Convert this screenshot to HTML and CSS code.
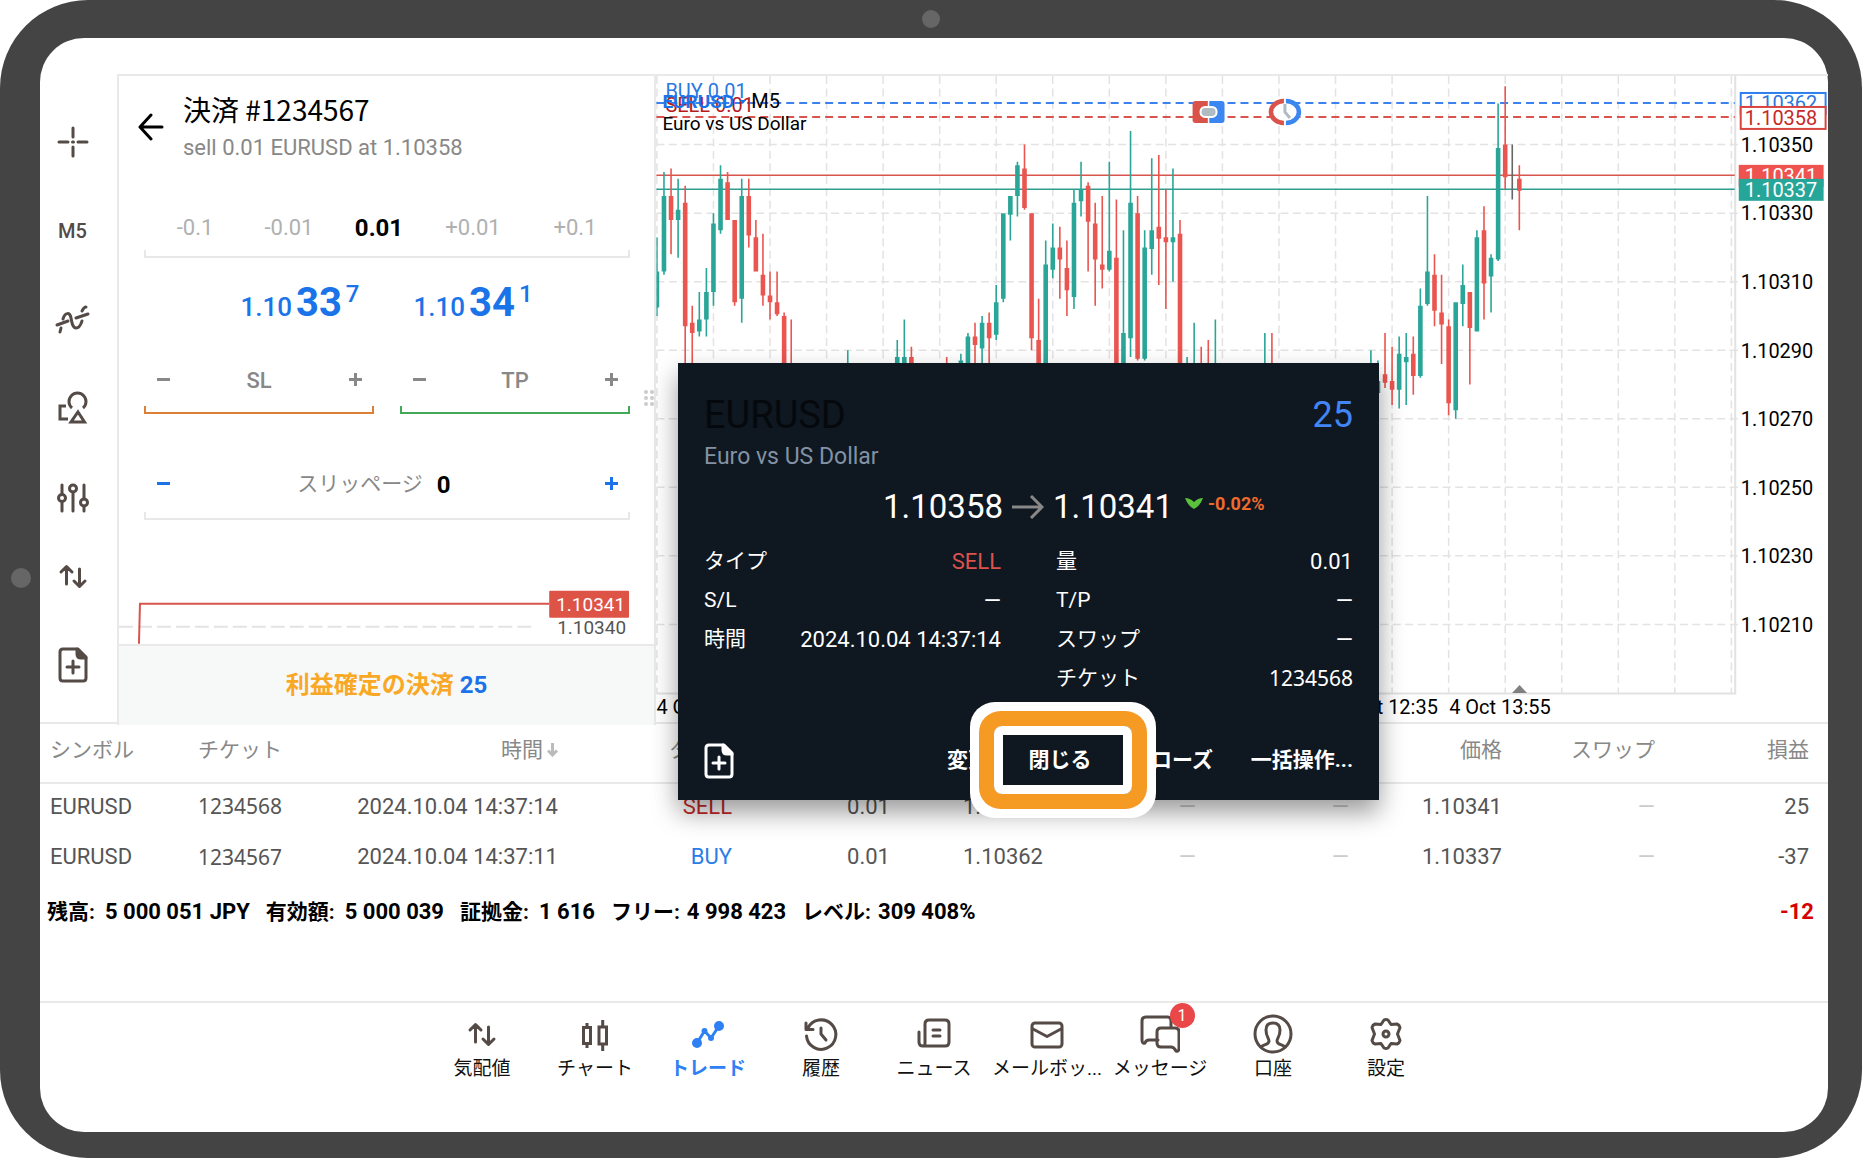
FILE: index.html
```html
<!DOCTYPE html>
<html lang="ja">
<head>
<meta charset="utf-8">
<meta name="viewport" content="width=device-width, initial-scale=1">
<title>トレード</title>
<link rel="stylesheet" href="styles.css">
</head>
<body>
<svg class="defs" aria-hidden="true">
  <symbol id="i-cross" viewBox="-20 -20 40 40"><path d="M0-14V-5M0 5V14M-14 0H-5M5 0H14M-.5 0H.5"/></symbol>
  <symbol id="i-indicator" viewBox="-20 -20 40 40"><path d="M-16 5-5 1M3-2 15-6M-13 12-12 8M-10-1C-8-8-3-8-2-2-1 4 0 8 3 8 7 8 8 4 9 1M9-9C10-11 11-13 13-13"/></symbol>
  <symbol id="i-shapes" viewBox="-20 -20 40 40"><path class="square" d="M-7-3H-13V10H-5M-1-1A8.500 8.500 0 1 1 10-1M5 3 11.500 13H-2Z"/></symbol>
  <symbol id="i-sliders" viewBox="-20 -20 40 40"><path d="M-11-13V-4M-11 4V13M0-6V13M11-13V1M11 8V13"/><circle cx="-11" cy="0" r="3.5"/><circle cx="0" cy="-9.5" r="3.5"/><circle cx="11" cy="4.5" r="3.5"/></symbol>
  <symbol id="i-updown" viewBox="-20 -20 40 40"><path d="M-6.5 8V-9M-12-4-6.5-9.5-1-4M6.5-7V10M1 5 6.5 10.5 12 5"/></symbol>
  <symbol id="i-doc" viewBox="-20 -20 40 40"><path d="M-10-16H5L13-8V13Q13 16 10 16H-10Q-13 16-13 13V-13Q-13-16-10-16ZM0-4V8M-6 2H6"/><path class="solid" d="M4-16V-11Q4-7 8-7H13Z"/></symbol>
  <symbol id="i-candles" viewBox="-20 -20 40 40"><path class="square" d="M-11.500-6.500H-4.500V9.500H-11.500ZM-8-11V-7M-8 10V14M4-7H11.500V10H4ZM7.700-14V-7M7.700 10V17"/></symbol>
  <symbol id="i-trade" viewBox="-20 -20 40 40"><path d="M-11 9-3.500-3 3 4 11-8"/><g class="solid"><circle cx="-11" cy="9" r="3.5"/><circle cx="11" cy="-8" r="3.5"/><circle cx="-3.500" cy="-3" r="1.500"/><circle cx="3" cy="4" r="1.500"/></g></symbol>
  <symbol id="i-history" viewBox="-20 -20 40 40"><path d="M-14.500 2A14.700 14.700 0 1 0-13-6M-15-11V-4.500H-8M0-6V0L5 6"/></symbol>
  <symbol id="i-news" viewBox="-20 -20 40 40"><path d="M-9-10Q-9-14-5-14H11Q15-14 15-10V8Q15 12 11 12H-11Q-15 12-15 8V-2M-9-10V9Q-9 12-11 12M-1-4H6M-1 2H6"/></symbol>
  <symbol id="i-mail" viewBox="-20 -20 40 40"><rect x="-15" y="-11" width="30" height="24" rx="3"/><path d="M-14-5 0 2.500 14-5"/></symbol>
  <symbol id="i-chat" viewBox="-20 -20 40 40"><path d="M-2 6H-11Q-14 6-15 9-18 10-18 6V-13Q-18-17-14-17H8Q11-17 11-13V-6M1-6H15Q19-6 19-2V14Q19 18 16 17 14 13 11 13H1Q-3 13-3 9V-2Q-3-6 1-6Z"/></symbol>
  <symbol id="i-account" viewBox="-20 -20 40 40"><circle cx="0" cy="0" r="18"/><path d="M-12 13C-9 10-4 11-4 7-4 4-7 3-7-4-7-9-4-11 0-11S7-9 7-4C7 3 4 4 4 7 4 11 9 10 12 13"/></symbol>
  <symbol id="i-gear" viewBox="-20 -20 40 40"><path d="M-2-14Q0-15 2-14L5-9.500 11-10Q13.500-9 14-6.500L11.500 0 14 6.500Q13.500 9 11 10L5 9.500 2 14Q0 15-2 14L-5 9.500-11 10Q-13.500 9-14 6.500L-11.500 0-14-6.500Q-13.500-9-11-10L-5-9.500Z"/><circle cx="0" cy="0" r="3"/></symbol>
</svg>

<div class="device">
  <span class="sensor sensor-top"></span>
  <span class="sensor sensor-left"></span>
  <main class="screen">
    <div class="workspace">
      <nav class="tools" aria-label="チャートツール">
        <button type="button" aria-label="十字線"><svg class="icon"><use href="#i-cross"/></svg></button>
        <button type="button" class="timeframe">M5</button>
        <button type="button" aria-label="指標"><svg class="icon"><use href="#i-indicator"/></svg></button>
        <button type="button" aria-label="オブジェクト"><svg class="icon"><use href="#i-shapes"/></svg></button>
        <button type="button" aria-label="表示設定"><svg class="icon"><use href="#i-sliders"/></svg></button>
        <button type="button" aria-label="売買"><svg class="icon"><use href="#i-updown"/></svg></button>
        <button type="button" aria-label="新規注文"><svg class="icon"><use href="#i-doc"/></svg></button>
      </nav>

      <section class="order">
        <header class="order-head">
          <button type="button" class="back" aria-label="戻る"><svg viewBox="0 0 26 30"><path d="M24 15H3M13 3 2 15 13 27"/></svg></button>
          <div>
            <h1>決済 #1234567</h1>
            <p>sell 0.01 EURUSD at 1.10358</p>
          </div>
        </header>
        <div class="field volume">
          <button type="button">-0.1</button>
          <button type="button">-0.01</button>
          <input type="text" value="0.01" aria-label="量">
          <button type="button">+0.01</button>
          <button type="button">+0.1</button>
        </div>
        <div class="quotes">
          <p class="quote">1.10<b>33</b><sup>7</sup></p>
          <p class="quote">1.10<b>34</b><sup>1</sup></p>
        </div>
        <div class="limits">
          <div class="field stepper sl">
            <button type="button" class="minus" aria-label="SLを下げる"></button>
            <input type="text" placeholder="SL" aria-label="SL">
            <button type="button" class="plus" aria-label="SLを上げる"></button>
          </div>
          <div class="field stepper tp">
            <button type="button" class="minus" aria-label="TPを下げる"></button>
            <input type="text" placeholder="TP" aria-label="TP">
            <button type="button" class="plus" aria-label="TPを上げる"></button>
          </div>
        </div>
        <div class="field stepper slippage">
          <button type="button" class="minus" aria-label="減らす"></button>
          <div class="slip-value">
            <label for="slip">スリッページ</label>
            <input id="slip" type="text" value="0">
          </div>
          <button type="button" class="plus" aria-label="増やす"></button>
        </div>
        <svg class="ticks" viewBox="0 0 536 124">
          <path d="M0 107H418" stroke="#e3e3e3" stroke-width="2" stroke-dasharray="14 5"/>
          <path d="M20 124 21 84H431" fill="none" stroke="#d9544d" stroke-width="2"/>
          <rect x="431" y="71" width="80" height="27" rx="1" fill="#dd5447"/>
          <text x="438" y="91" fill="#fff">1.10341</text>
          <text x="439" y="114" fill="#555">1.10340</text>
        </svg>
        <button type="button" class="confirm">利益確定の決済 <span>25</span></button>
        <span class="grip" aria-hidden="true"><i></i><i></i><i></i><i></i><i></i><i></i></span>
      </section>

      <section class="chart">
        <svg id="chart" viewBox="0 0 1173 647" role="img" aria-label="EURUSD M5">
          <path id="grid" fill="none" stroke="#e3e3e3" stroke-width="1.500" stroke-dasharray="8 4.500"/>
          <path d="M0 618.500H1080.500V0" fill="none" stroke="#e2e2e2" stroke-width="2"/>
          <path d="M0 99.500H1080" stroke="#d9544d" stroke-width="1.500"/>
          <path d="M0 113.500H1080" stroke="#2f9d92" stroke-width="1.500"/>
          <path d="M0 27H1080" stroke="#3b82ee" stroke-width="2" stroke-dasharray="8 5"/>
          <path d="M0 41H1080" stroke="#d9544d" stroke-width="2" stroke-dasharray="8 5"/>
          <g id="candles"></g>
          <path d="M857 618 864.500 610 872 618Z" fill="#808080"/>
          <g transform="translate(553 36)">
            <path d="M0-11H-13Q-16-11-16-8V8Q-16 11-13 11H0Z" fill="#d9534a"/>
            <path d="M0-11H13Q16-11 16-8V8Q16 11 13 11H0Z" fill="#3b86f0"/>
            <path d="M0-11V-6M0 6V11" stroke="#fff" stroke-width="1.500"/>
            <rect x="-8" y="-5" width="16" height="10" rx="4.500" fill="#b0bcc4" stroke="#fff" stroke-width="2"/>
          </g>
          <g transform="translate(629.500 36)">
            <circle r="13" fill="#fff"/>
            <path d="M-1-11A13 11 0 0 0-1 11" fill="none" stroke="#d9534a" stroke-width="4.500"/>
            <path d="M1-11A13 11 0 0 1 1 11" fill="none" stroke="#3b86f0" stroke-width="4.500"/>
            <path d="M0-8V0L5 6" fill="none" stroke="#b0bcc4" stroke-width="3"/>
          </g>
          <g class="axis">
            <text x="1086" y="76">1.10350</text><text x="1086" y="144">1.10330</text>
            <text x="1086" y="213">1.10310</text><text x="1086" y="282">1.10290</text>
            <text x="1086" y="351">1.10270</text><text x="1086" y="420">1.10250</text>
            <text x="1086" y="488">1.10230</text><text x="1086" y="557">1.10210</text>
            <text x="0" y="639">4 Oct 04:35</text>
            <text x="681" y="639">4 Oct 12:35</text><text x="794" y="639">4 Oct 13:55</text>
          </g>
          <g class="tags">
            <rect x="1086" y="17" width="85" height="21" fill="#fff" stroke="#2f80ed" stroke-width="2"/>
            <text x="1090" y="34" fill="#2a78e0">1.10362</text>
            <rect x="1086" y="31" width="85" height="22" fill="#fff" stroke="#d9443f" stroke-width="2"/>
            <text x="1090" y="49" fill="#c62828">1.10358</text>
            <rect x="1084" y="89" width="85" height="22" fill="#ee534f"/>
            <text x="1090" y="107" fill="#fff">1.10341</text>
            <rect x="1084" y="103" width="85" height="22" fill="#26a599"/>
            <text x="1090" y="121" fill="#fff">1.10337</text>
          </g>
          <g class="legend">
            <text x="9" y="22" fill="#2a78e0">BUY 0.01</text>
            <text x="9" y="36" fill="#b71c1c">SELL 0.01</text>
            <text x="6" y="32" fill="#1a73e8" class="strong">EURUSD</text>
            <path d="M83 24H90L86.500 28Z" fill="#1a73e8"/>
            <text x="95" y="32">M5</text>
            <text x="6" y="54" class="name">Euro vs US Dollar</text>
          </g>
        </svg>
      </section>
    </div>

    <table class="positions">
      <colgroup><col class="w-sym"><col class="w-tic"><col class="w-time"><col class="w-type"><col class="w-vol"><col class="w-num"><col class="w-num"><col class="w-num"><col class="w-num"><col class="w-num"><col class="w-pl"></colgroup>
      <thead>
        <tr><th class="left">シンボル</th><th class="left">チケット</th><th>時間<svg class="sort" viewBox="0 0 11 14"><path d="M5.500 0V12M1 7.500 5.500 12 10 7.500"/></svg></th><th>タイプ</th><th>量</th><th>価格</th><th>S/L</th><th>T/P</th><th>価格</th><th>スワップ</th><th>損益</th></tr>
      </thead>
      <tbody>
        <tr><td class="left">EURUSD</td><td class="left ticket">1234568</td><td>2024.10.04 14:37:14</td><td class="sell">SELL</td><td>0.01</td><td>1.10358</td><td class="none">—</td><td class="none">—</td><td>1.10341</td><td class="none">—</td><td>25</td></tr>
        <tr><td class="left">EURUSD</td><td class="left ticket">1234567</td><td>2024.10.04 14:37:11</td><td class="buy">BUY</td><td>0.01</td><td>1.10362</td><td class="none">—</td><td class="none">—</td><td>1.10337</td><td class="none">—</td><td>-37</td></tr>
      </tbody>
    </table>

    <div class="summary">
      <p><span>残高:</span> 5 000 051 JPY</p>
      <p><span>有効額:</span> 5 000 039</p>
      <p><span>証拠金:</span> 1 616</p>
      <p class="tight"><span>フリー:</span> 4 998 423</p>
      <p class="tight"><span>レベル:</span> 309 408%</p>
      <p class="total">-12</p>
    </div>

    <nav class="tabs" aria-label="メイン">
      <a href="#quotes"><svg class="icon"><use href="#i-updown"/></svg>気配値</a>
      <a href="#chart"><svg class="icon"><use href="#i-candles"/></svg>チャート</a>
      <a href="#trade" class="active" aria-current="page"><svg class="icon"><use href="#i-trade"/></svg>トレード</a>
      <a href="#history"><svg class="icon"><use href="#i-history"/></svg>履歴</a>
      <a href="#news"><svg class="icon"><use href="#i-news"/></svg>ニュース</a>
      <a href="#mail"><svg class="icon"><use href="#i-mail"/></svg>メールボッ...</a>
      <a href="#messages"><svg class="icon"><use href="#i-chat"/></svg>メッセージ<span class="badge">1</span></a>
      <a href="#accounts"><svg class="icon"><use href="#i-account"/></svg>口座</a>
      <a href="#settings"><svg class="icon"><use href="#i-gear"/></svg>設定</a>
    </nav>

    <section class="modal" role="dialog" aria-label="EURUSD">
      <header class="modal-head"><h2>EURUSD</h2><span>25</span></header>
      <p class="modal-sub">Euro vs US Dollar</p>
      <p class="move">
        <span class="from">1.10358</span>
        <svg class="arrow" viewBox="0 0 32 24"><path d="M0 12H30M19 1 30 12 19 23"/></svg>
        <span>1.10341</span>
        <svg class="chev" viewBox="0 0 18 12"><path d="M0 1Q5 1 9 5 13 1 18 1 15 9 9 12 3 9 0 1Z"/></svg>
        <span class="pct">-0.02%</span>
      </p>
      <dl class="facts">
        <div><dt>タイプ</dt><dd class="red">SELL</dd></div>
        <div><dt>量</dt><dd>0.01</dd></div>
        <div><dt>S/L</dt><dd>—</dd></div>
        <div><dt>T/P</dt><dd>—</dd></div>
        <div><dt>時間</dt><dd>2024.10.04 14:37:14</dd></div>
        <div><dt>スワップ</dt><dd>—</dd></div>
        <div class="second"><dt>チケット</dt><dd class="ticket">1234568</dd></div>
      </dl>
      <footer class="actions">
        <button type="button" class="new" aria-label="新規注文"><svg class="icon"><use href="#i-doc"/></svg></button>
        <button type="button" class="edit">変更</button>
        <button type="button" class="close">閉じる<span class="ring"></span></button>
        <button type="button" class="by">クローズ</button>
        <button type="button" class="bulk">一括操作...</button>
      </footer>
    </section>
  </main>
</div>
<script src="chart.js"></script>
</body>
</html>
```

FILE: styles.css
```css
* { box-sizing: border-box; }

body {
  margin: 0;
  background: #fff;
  color: #111;
  font: 22px/1.2 Roboto, "Noto Sans CJK JP", sans-serif;
}

h1, h2, p, dl, dd { margin: 0; font-weight: 400; }
button, input { border: 0; padding: 0; background: none; color: inherit; font: inherit; }
button { white-space: nowrap; cursor: pointer; }
svg { display: block; }
.defs { position: absolute; width: 0; height: 0; }

.icon {
  width: 40px;
  height: 40px;
  overflow: visible;
  fill: none;
  stroke: currentColor;
  stroke-width: 3;
  stroke-linecap: round;
  stroke-linejoin: round;
}
.solid { fill: currentColor; }
.square { stroke-linecap: butt; stroke-linejoin: miter; }

/* Device shell */
.device {
  position: relative;
  min-height: 100vh;
  display: flex;
  padding: 38px 34px 26px 40px;
  border-radius: 88px;
  background: #444;
}
.sensor { position: absolute; width: 18px; height: 18px; border-radius: 50%; background: #666; }
.sensor-top { top: 10px; left: 50%; margin-left: -9px; }
.sensor-left { left: 11px; top: 50%; width: 20px; height: 20px; margin-top: -11px; }
.screen {
  position: relative;
  flex: 1;
  min-width: 0;
  display: flex;
  flex-direction: column;
  padding-top: 36px;
  border-radius: 44px;
  background: #fff;
}

/* Workspace */
.workspace {
  display: grid;
  grid-template-columns: 77px 539px minmax(0, 1fr);
  height: 650px;
  border-bottom: 2px solid #e9e9e9;
}
.tools {
  display: grid;
  grid-template-rows: repeat(5, 89px) 68px 110px;
  padding-top: 23px;
  padding-right: 12px;
  color: #544a46;
}
.tools button { display: grid; place-items: center; }
.tools .timeframe { font-size: 20px; font-weight: 500; }

.order {
  position: relative;
  display: flex;
  flex-direction: column;
  border: solid #e9e9e9;
  border-width: 2px 2px 0;
}
.order-head { display: flex; padding: 13px 0 0 19px; gap: 19px; }
.back { width: 26px; height: 76px; }
.back svg { width: 26px; height: 30px; fill: none; stroke: #000; stroke-width: 3; stroke-linecap: round; stroke-linejoin: round; }
.order h1 {
  font-family: "Noto Sans CJK JP", sans-serif;
  font-size: 28px;
  line-height: 40px;
  color: #000;
}
.order-head p { line-height: 37px; color: #888; }

.field {
  --line: #e8e8e8;
  display: flex;
  align-items: center;
  justify-content: space-between;
  background:
    linear-gradient(var(--line), var(--line)) bottom / 100% 2px no-repeat,
    linear-gradient(var(--line), var(--line)) left bottom / 2px 8px no-repeat,
    linear-gradient(var(--line), var(--line)) right bottom / 2px 8px no-repeat;
}
.field input { text-align: center; }
.volume { display: grid; grid-template-columns: 102px 86px 94px 94px 1fr; margin: 32px 24px 0 25px; height: 60px; color: #b0b0b0; }
.volume input { width: 100%; font-size: 24px; font-weight: 700; color: #000; }

.quotes { display: flex; justify-content: center; gap: 54px; height: 90px; line-height: 90px; }
.quote { font-size: 26px; font-weight: 500; color: #1a73e8; }
.quote b { margin-left: 4px; font-size: 40px; font-weight: 700; }
.quote sup { position: relative; top: -14px; margin-left: 4px; font-size: 24px; line-height: 0; vertical-align: baseline; }

.limits { display: flex; gap: 26px; padding: 0 24px 0 25px; }
.stepper { flex: 1; height: 66px; padding: 0 9px; color: #888; font-weight: 500; }
.stepper input { width: 60px; }
.stepper input::placeholder { color: #888; opacity: 1; }
.sl { --line: #dd7f35; }
.tp { --line: #43a857; }
.minus, .plus { position: relative; width: 20px; height: 30px; }
.minus::before, .plus::before, .plus::after {
  content: "";
  position: absolute;
  inset: 12px 3px auto 4px;
  height: 3px;
  background: currentColor;
}
.plus::after { inset: 7px auto auto 9px; width: 3px; height: 13px; }
.slippage { flex: none; margin: 36px 24px 0 25px; height: 70px; font-weight: 400; color: #1a73e8; }
.slip-value { display: flex; align-items: center; gap: 14px; color: #888; font-size: 21px; }
.slippage input { width: 40px; font-size: 24px; font-weight: 700; text-align: left; color: #000; }
.ticks { width: 100%; flex: 1; min-height: 0; font-size: 19px; }
.confirm {
  height: 81px;
  border-top: 2px solid #e9e9e9;
  background: #f7f8f8;
  color: #f9a825;
  font-size: 24px;
  font-weight: 700;
}
.confirm span { color: #1a73e8; }
.grip {
  position: absolute;
  right: 0;
  top: 314px;
  display: grid;
  grid-template-columns: 4px 4px;
  gap: 2px;
}
.grip i { width: 4px; height: 4px; border-radius: 50%; background: #ccc; }

.chart { border-top: 2px solid #e9e9e9; }
.chart svg { width: 100%; height: 646px; font-size: 20px; }
.legend .strong { font-weight: 700; font-size: 19px; }
.legend .name { font-size: 19px; }
.up { fill: #2aa698; }
.down { fill: #ea5550; }
.flat { fill: #666; }

/* Open positions */
.positions { width: 100%; border-collapse: collapse; table-layout: fixed; color: #555; }
.w-sym { width: 158px; }
.w-tic { width: 132px; }
.w-time { width: 228px; }
.w-type { width: 174px; }
.w-vol { width: 158px; }
.w-num { width: 153px; }
.w-pl { width: 173px; }
.positions th, .positions td { padding: 0; text-align: right; white-space: nowrap; }
.positions th { height: 59px; padding-bottom: 4px; border-bottom: 2px solid #e9e9e9; font-size: 21px; font-weight: 400; color: #888; }
.positions td { height: 51px; padding-bottom: 4px; }
.positions .left { text-align: left; }
.positions .left:first-child { padding-left: 10px; }
.positions th:last-child, .positions td:last-child { padding-right: 19px; }
.sort { display: inline-block; width: 11px; height: 14px; margin-left: 4px; fill: none; stroke: #bbb; stroke-width: 3; }
.ticket { font-family: "Noto Sans", sans-serif; font-size: 21px; }
.positions .sell { color: #c62828; }
.positions .buy { color: #2a7de8; }
.positions .none { color: #ccc; }

.summary { display: flex; padding: 0 14px 0 7px; gap: 16px; line-height: 54px; color: #000; }
.summary p { display: flex; gap: 10px; font-weight: 700; }
.summary .tight { gap: 7px; }
.summary span { font-size: 21px; }
.summary .total { margin-left: auto; color: #d50000; }

/* Bottom tabs */
.tabs {
  display: grid;
  grid-template-columns: repeat(9, 113px);
  justify-content: center;
  margin-top: auto;
  height: 131px;
  padding-top: 11px;
  border-top: 2px solid #e9e9e9;
}
.tabs a {
  position: relative;
  display: flex;
  flex-direction: column;
  align-items: center;
  font-size: 19px;
  line-height: 30px;
  white-space: nowrap;
  color: #111;
  text-decoration: none;
}
.tabs .icon { color: #544a46; }
.tabs .active, .tabs .active .icon { color: #2f80f5; font-weight: 700; }
.badge {
  position: absolute;
  left: 66px;
  top: -11px;
  width: 25px;
  height: 25px;
  border-radius: 50%;
  background: #ea4848;
  color: #fff;
  font-size: 16px;
  line-height: 25px;
  text-align: center;
}

/* Position details */
.modal {
  position: absolute;
  left: 638px;
  top: 325px;
  width: 701px;
  height: 437px;
  display: flex;
  flex-direction: column;
  padding: 28px 26px 15px;
  background: #0f1720;
  color: #fff;
  box-shadow: 0 12px 24px rgba(0, 0, 0, .4);
}
.modal-head { display: flex; justify-content: space-between; font-size: 36px; line-height: 48px; }
.modal-head h2 { font-size: 38px; color: #05090d; }
.modal-head span { color: #4285f4; }
.modal-sub { font-size: 23px; line-height: 36px; color: #8292a4; }
.move { display: flex; align-items: center; height: 64px; font-size: 33px; }
.from { margin-left: 179px; }
.arrow { width: 32px; height: 24px; margin: 0 9px; fill: none; stroke: #888; stroke-width: 3; }
.chev { width: 18px; height: 12px; margin: 0 5px 8px 12px; fill: #5ac13b; }
.pct { padding-bottom: 6px; font-size: 18px; font-weight: 700; color: #ee6b2d; }
.facts { display: grid; grid-template-columns: 297px 297px; column-gap: 55px; margin-top: 3px; line-height: 39px; }
.facts div { display: flex; justify-content: space-between; }
.facts dt { font-size: 21px; }
.facts .second { grid-column: 2; }
.red { color: #dc524c; }
.actions { display: flex; align-items: center; margin-top: auto; height: 50px; font-size: 21px; font-weight: 700; }
.actions button { height: 50px; padding-top: 2px; }
.new { width: 34px; }
.new .icon { margin-left: -5px; }
.edit { margin-left: 209px; }
.actions .close { position: relative; width: 120px; margin-left: 14px; padding-right: 6px; background: #0f1720; }
.ring {
  position: absolute;
  inset: -9px;
  border: 9px solid #fff;
  border-radius: 8px;
  box-shadow: 0 0 0 15px #f59a22, 0 0 0 24px #fff;
}
.by { margin-left: 7px; }
.bulk { margin-left: auto; }
```

FILE: chart.js
```js
// Each candle: slot, high, body top, body bottom, low (points above 1.10000), type.
const candles = [
  [0,323,313,302.5,300,"up"],[1,342,335,313,312,"up"],[2,343,335,328,318,"down"],[3,340,331,328,317,"up"],
  [4,338,333,297,270,"down"],[5,303,298,295,270,"down"],[6,307,299,295.5,294,"up"],[7,314,307,299,294,"up"],
  [8,330,327,307,303,"up"],[9,344,340,325,324,"up"],[10,342,339,328,328,"down"],[11,328,328,304,303,"down"],
  [12,340,335,305,298,"up"],[13,340,335,323.5,320,"down"],[14,328,323,313,313,"down"],[15,324,312,306,303,"down"],
  [16,313,306,304,299,"down"],[17,313,304,300.5,300,"down"],[18,301,300,270,270,"down"],[19,299,285,280,270,"down"],
  [27,290,280,275,270,"up"],[34,293,288,275,270,"up"],[35,299,288,275,270,"up"],[36,291,288,275,270,"down"],
  [41,288,280,275,270,"down"],[43,289,287,275,270,"up"],[44,295,294,275,270,"up"],[45,298,294,291.5,270,"down"],
  [46,300,298,290.5,270,"up"],[47,301,298,293.5,280,"down"],[48,309,304,294.5,293,"up"],[49,330,330,305,304,"up"],
  [50,335,335,329.5,322,"up"],[51,345,344,335,329,"up"],[52,350,343,331.5,331,"down"],[53,330,330,293.5,290,"down"],
  [54,305,293,275,270,"down"],[55,322,315,275,270,"up"],[56,327,320,313.5,311,"up"],[57,326,320,316.5,305,"down"],
  [58,322,314,307.5,300,"down"],[59,337,333,305.5,302,"up"],[60,345,337,333.5,329,"up"],[61,339,338,327.5,313,"down"],
  [62,333,327,316.5,303,"down"],[63,335,315,313.5,308,"down"],[64,345,319,313.5,313,"up"],[65,334,317,275,270,"down"],
  [66,325,295,275,270,"up"],[67,354,333,293.5,288,"up"],[68,335,330,287.5,287,"down"],[69,325,320,287.5,287,"up"],
  [70,346,325,319.5,312,"up"],[71,347,326,322.5,309,"down"],[72,337,323,321.5,302,"down"],[73,343,323,321.5,310,"up"],
  [74,328,324,275,270,"down"],[75,288,280,275,270,"up"],[76,298,280,275,270,"up"],[77,291,280,275,270,"down"],
  [78,293,280,275,270,"down"],[79,299,280,275,270,"up"],[86,295,280,275,270,"up"],[87,295,280,275,270,"down"],
  [101,290,280,275,270,"up"],[102,287,281,277.5,270,"up"],[103,295,283,280.5,279,"down"],[104,291,281,278.5,274,"down"],
  [105,294,289,278.5,273,"up"],[106,295,288,286.5,274,"up"],[107,294,289,282.5,277,"down"],[108,308,303,282.5,282,"up"],
  [109,335,313,303.5,303,"up"],[110,318,312,301.5,297,"down"],[111,312,301,297.5,286,"down"],[112,299,297,274.5,271,"down"],
  [113,304,304,272.5,270,"up"],[114,315,309,303.5,297,"up"],[115,307,307,296.5,280,"down"],[116,325,323,295.5,295.5,"up"],
  [117,332,325,309.5,299,"down"],[118,318,317,311.5,301,"up"],[119,362,349,316.5,316,"up"],[120,367,350,340.5,337,"down"],
  [121,350,341,340.8,334,"flat"],[122,344,340,336.5,325,"down"]
];

const SLOT = 7.08;
const x = slot => 0.5 + slot * SLOT;
const y = points => 68.7 + (350 - points) * 3.4325;
const rect = (cx, w, top, bottom) => {
  const left = Math.max(0, cx - w / 2);
  return `M${left} ${top}H${cx + w / 2}V${bottom}H${left}Z`;
};

let grid = "";
for (let i = 0; i < 20; i++) grid += `M${x(i * 8)} 0V618`;
for (let p = 350; p >= 210; p -= 20) grid += `M0 ${y(p)}H1084`;
document.getElementById("grid").setAttribute("d", grid);

const layer = document.getElementById("candles");
for (const type of ["up", "down", "flat"]) {
  const path = document.createElementNS("http://www.w3.org/2000/svg", "path");
  path.setAttribute("class", type);
  path.setAttribute("d", candles.filter(c => c[5] === type).map(([s, h, t, b, l]) =>
    rect(x(s), 1.6, y(h), y(l)) + rect(x(s), 4.6, y(t), y(b))).join(""));
  layer.append(path);
}
```
